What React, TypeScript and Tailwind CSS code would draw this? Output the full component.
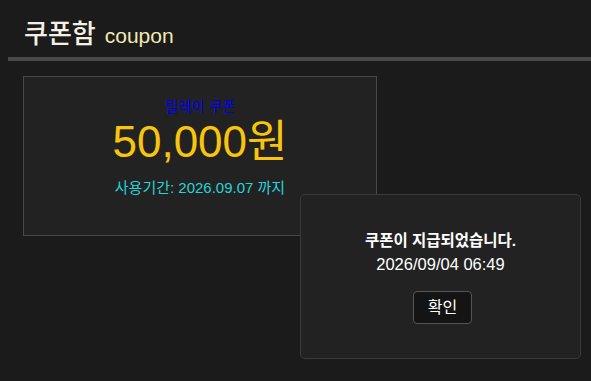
import React from "react";

const font = { fontFamily: '"Liberation Sans", "Noto Sans CJK KR", sans-serif' };

const CouponCard = () => {
  return (
    <div className="ml-[23px] mt-[15px] w-[354px] h-[160px] border border-[#4a4949] bg-[#232223] flex flex-col items-center">
      <p className="mt-[20px] text-[14.5px] leading-[20px] text-[#0000ee]">릴레이 쿠폰</p>
      <p className="mt-[1px] text-[44px] leading-[48px] text-[#f8c50d]">50,000원</p>
      <p className="mt-[12px] text-[15px] leading-[20px] text-[#27d3d6]">사용기간: 2026.09.07 까지</p>
    </div>
  );
};

const Alert = () => {
  return (
    <div className="absolute left-[300px] top-[194px] w-[281px] h-[165px] rounded-[5px] border border-[#3b3a3a] bg-[#232223] flex flex-col items-center">
      <p className="mt-[36px] text-[15.5px] leading-[20px] font-bold text-white">쿠폰이 지급되었습니다.</p>
      <p className="mt-[2px] text-[16.5px] leading-[22px] text-white">2026/09/04 06:49</p>
      <button className="mt-[16px] ml-[4px] w-[59px] h-[33px] rounded-[4px] border border-[#555] bg-[#141414] text-[16px] text-white">
        확인
      </button>
    </div>
  );
};

export default function App() {
  return (
    <div className="relative w-full min-h-screen bg-[#1c1b1b] overflow-hidden" style={font}>
      {/* Title */}
      <div className="pl-[24px] pt-[19px] h-[57px] flex items-baseline gap-[9px]">
        <h1 className="text-[26px] leading-[30px] font-medium text-[#f4f1e4]">쿠폰함</h1>
        <span className="text-[21px] leading-[30px] text-[#f1e9b3]">coupon</span>
      </div>
      <div className="ml-[8px] h-[4px] bg-[#4a4949]" />

      <CouponCard />
      <Alert />
    </div>
  );
}
